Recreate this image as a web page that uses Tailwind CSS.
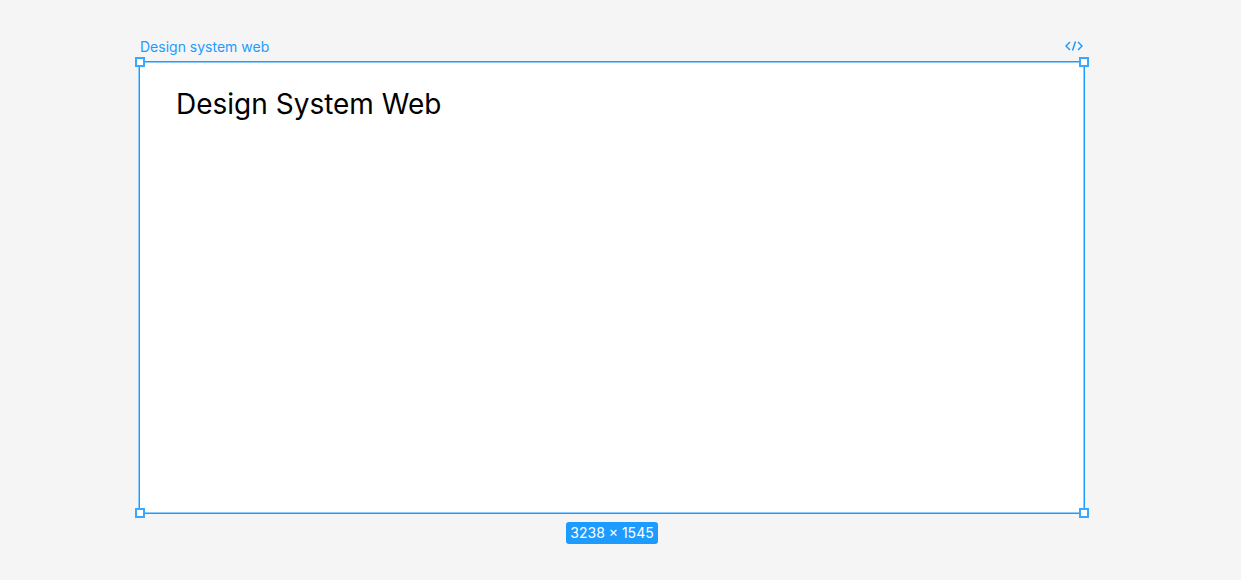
<!DOCTYPE html>
<html lang="en">
<head>
  <meta charset="UTF-8" />
  <meta name="viewport" content="width=device-width, initial-scale=1.0" />
  <title>Design system web</title>
  <script src="https://cdn.jsdelivr.net/npm/@tailwindcss/browser@4"></script>
</head>
<body class="bg-[#f5f5f5] font-['Inter',sans-serif]">

<main class="flex min-h-screen flex-col pt-9 pr-[156px] pb-9 pl-[139px]">
  <!-- frame label -->
  <header class="flex h-[25px] items-start justify-between pr-0.5 pl-px text-[#1e9bff]">
    <span class="text-sm leading-[22px]">Design system web</span>
    <button type="button" aria-label="Dev mode" class="flex h-5 items-center">
      <svg class="h-3 w-[18px]" viewBox="0 0 18 12" fill="none" stroke="currentColor" stroke-width="1.5">
        <path d="M5 2 1 6l4 4M13 2l4 4-4 4M10.500 1.500 7.500 10.500" />
      </svg>
    </button>
  </header>

  <!-- selected frame -->
  <section class="relative flex-1 border border-[#1e9bff] bg-white px-9 py-6 shadow-[-1px_0_0_#8accff,inset_0_1px_0_#8accff,inset_-1px_-1px_0_#8accff]">
    <h1 class="text-[28px] leading-9">Design System Web</h1>

    <span class="absolute -top-[5px] -left-[5px] size-[10px] border-2 border-[#3ba8ff] bg-white"></span>
    <span class="absolute -top-[5px] -right-[5px] size-[10px] border-2 border-[#3ba8ff] bg-white"></span>
    <span class="absolute -bottom-[5px] -left-[5px] size-[10px] border-2 border-[#3ba8ff] bg-white"></span>
    <span class="absolute -right-[5px] -bottom-[5px] size-[10px] border-2 border-[#3ba8ff] bg-white"></span>
  </section>

  <!-- frame size -->
  <footer class="flex justify-center pt-2">
    <span class="rounded-[3px] bg-[#1e9bff] px-1 text-sm leading-[22px] text-white">3238 × 1545</span>
  </footer>
</main>

</body>
</html>
